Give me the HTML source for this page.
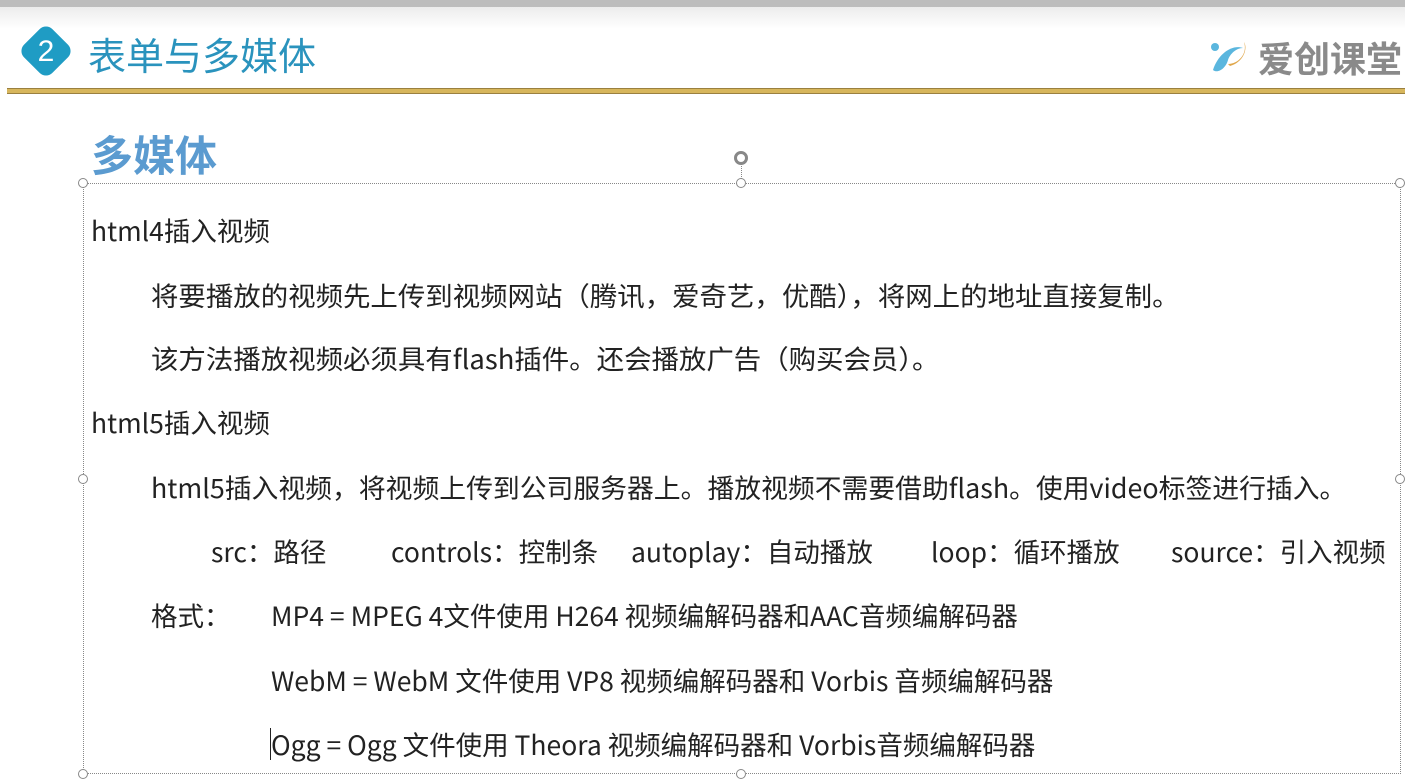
<!DOCTYPE html>
<html><head><meta charset="utf-8"><style>
*{margin:0;padding:0;box-sizing:border-box}
body{width:1405px;height:778px;overflow:hidden;background:#fff;position:relative;font-family:"Liberation Sans","Noto Sans CJK SC",sans-serif}
.t{position:absolute;white-space:nowrap;font-size:26.5px;color:#222;line-height:30px;font-family:"Noto Sans CJK SC","Liberation Sans",sans-serif;transform-origin:left center}
.w{transform:scaleX(1.035)}
.h{position:absolute}
.dot{position:absolute;width:10px;height:10px;border:1px solid #888;border-radius:50%;background:#fff}
</style></head><body>
<div class="h" style="left:0;top:0;width:1405px;height:7px;background:#bdbdbd"></div>
<div class="h" style="left:0;top:7px;width:1405px;height:22px;background:linear-gradient(#ececec,#fff)"></div>
<div class="h" style="left:26px;top:31px;width:40px;height:40px;background:#1f9cc4;border-radius:9px;transform:rotate(45deg)"></div>
<div class="h" style="left:26px;top:32px;width:40px;height:40px;color:#fff;font-size:30px;text-align:center;line-height:40px;font-family:'Liberation Sans',sans-serif">2</div>
<div class="h" style="left:88px;top:30px;font-size:38px;color:#2a93bd;line-height:48px;font-family:'Noto Sans CJK SC',sans-serif">表单与多媒体</div>
<svg class="h" style="left:1210px;top:36px" width="42" height="40" viewBox="0 0 42 40"><circle cx="5" cy="11" r="4" fill="#5ab6de"/><path d="M3 34 C8 18 22 8 33 12 C26 12 20 18 18 24 C16 32 8 38 3 34Z" fill="#5ab6de"/><path d="M18 28 C28 28 38 18 34 6 C38 12 34 26 20 30Z" fill="#e0a74b"/></svg>
<div class="h" style="left:1258px;top:34px;font-size:36px;color:#8a8a8a;font-weight:bold;line-height:46px;font-family:'Noto Sans CJK SC',sans-serif">爱创课堂</div>
<div class="h" style="left:7px;top:88px;width:1398px;height:6px;background:#d7b65c;border-top:1px solid #9a8040;border-bottom:1px solid #9a8040"></div>
<div class="h" style="left:91px;top:128px;font-size:42px;font-weight:bold;color:#5b9bd0;line-height:52px;font-family:'Noto Sans CJK SC',sans-serif">多媒体</div>
<div class="h" style="left:83px;top:183px;width:1318px;height:591px;border:1px dotted #888"></div>
<div class="h" style="left:741px;top:160px;width:0;height:23px;border-left:1px dotted #888"></div>
<div class="dot" style="left:734px;top:151px;width:14px;height:14px;border:3px solid #888"></div>
<div class="dot" style="left:78px;top:178px"></div>
<div class="dot" style="left:736px;top:178px"></div>
<div class="dot" style="left:1395px;top:178px"></div>
<div class="dot" style="left:78px;top:474px"></div>
<div class="dot" style="left:1395px;top:474px"></div>
<div class="dot" style="left:78px;top:769px"></div>
<div class="dot" style="left:736px;top:769px"></div>
<div class="t" style="left:91px;top:215px">html4插入视频</div>
<div class="t w" style="left:151px;top:280px">将要播放的视频先上传到视频网站（腾讯，爱奇艺，优酷），将网上的地址直接复制。</div>
<div class="t w" style="left:151px;top:343px">该方法播放视频必须具有flash插件。还会播放广告（购买会员）。</div>
<div class="t" style="left:91px;top:407px">html5插入视频</div>
<div class="t" style="left:151px;top:472px;transform:scaleX(1.012)">html5插入视频，将视频上传到公司服务器上。播放视频不需要借助flash。使用video标签进行插入。</div>
<div class="t" style="left:211px;top:536px">src：路径</div>
<div class="t" style="left:391px;top:536px">controls：控制条</div>
<div class="t" style="left:631px;top:536px">autoplay：自动播放</div>
<div class="t" style="left:931px;top:536px">loop：循环播放</div>
<div class="t" style="left:1171px;top:536px">source：引入视频</div>
<div class="t" style="left:151px;top:600px">格式：</div>
<div class="t" style="left:271px;top:600px">MP4 = MPEG 4文件使用 H264 视频编解码器和AAC音频编解码器</div>
<div class="t" style="left:271px;top:665px">WebM = WebM 文件使用 VP8 视频编解码器和 Vorbis 音频编解码器</div>
<div class="t" style="left:271px;top:729px">Ogg = Ogg 文件使用 Theora 视频编解码器和 Vorbis音频编解码器</div>
<div class="h" style="left:270px;top:728px;width:1px;height:32px;background:#222"></div>
</body></html>
